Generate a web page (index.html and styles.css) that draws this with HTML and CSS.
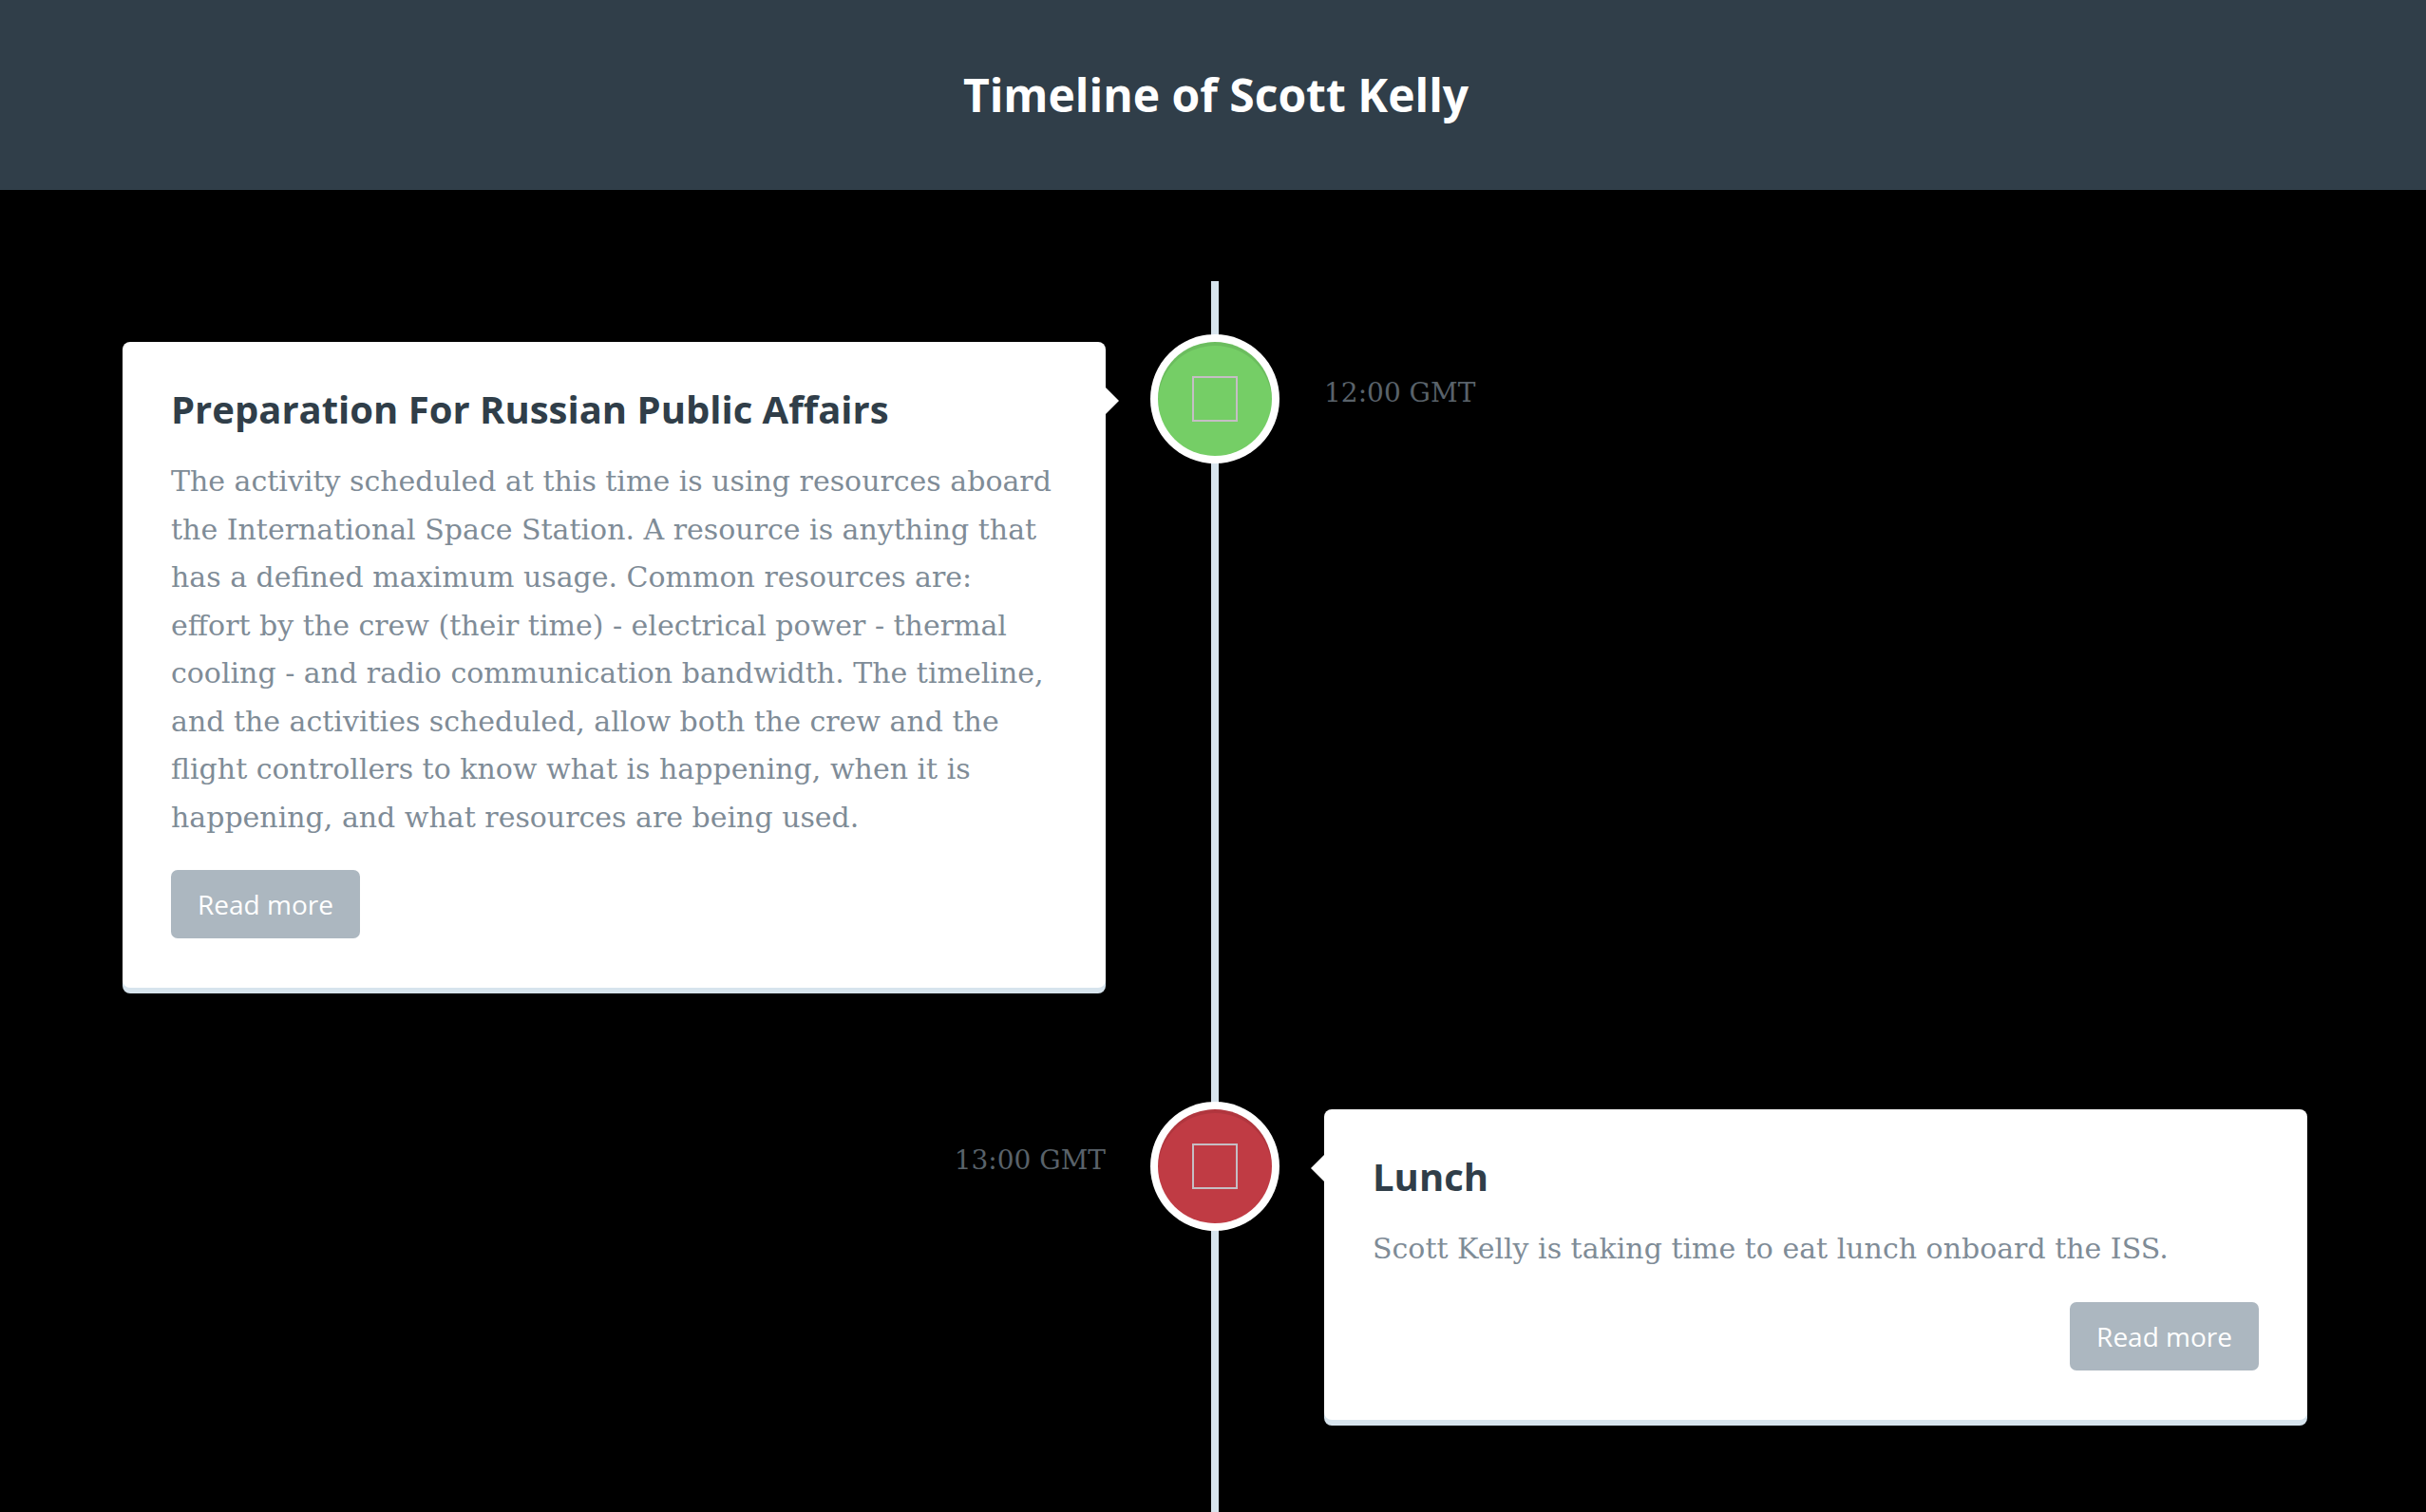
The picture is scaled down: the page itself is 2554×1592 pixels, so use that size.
FILE: index.html
```html
<!DOCTYPE html>
<html lang="en">
<head>
<meta charset="utf-8">
<title>Timeline of Scott Kelly</title>
<link rel="stylesheet" href="styles.css">
</head>
<body>
<header class="page-header">
  <h1>Timeline of Scott Kelly</h1>
</header>
<section class="timeline">
  <div class="tl-block">
    <div class="tl-card">
      <h2>Preparation For Russian Public Affairs</h2>
      <p>The activity scheduled at this time is using resources aboard the International Space Station. A resource is anything that has a defined maximum usage. Common resources are: effort by the crew (their time) - electrical power - thermal cooling - and radio communication bandwidth. The timeline, and the activities scheduled, allow both the crew and the flight controllers to know what is happening, when it is happening, and what resources are being used.</p>
      <a class="read-more" href="#">Read more</a>
    </div>
    <div class="tl-marker tl-green"><span class="tl-icon"></span></div>
    <span class="tl-date">12:00 GMT</span>
  </div>
  <div class="tl-block tl-even">
    <div class="tl-card">
      <h2>Lunch</h2>
      <p>Scott Kelly is taking time to eat lunch onboard the ISS.</p>
      <a class="read-more" href="#">Read more</a>
    </div>
    <div class="tl-marker tl-red"><span class="tl-icon"></span></div>
    <span class="tl-date">13:00 GMT</span>
  </div>
</section>
</body>
</html>
```

FILE: styles.css
```css
* { box-sizing: border-box; }
html, body { margin: 0; padding: 0; }
body {
  background: #000;
  font-family: "DejaVu Serif", serif;
  color: #7f8c97;
  line-height: 1;
}
.page-header {
  height: 200px;
  background: #303e49;
  display: flex;
  align-items: center;
  justify-content: center;
  padding-left: 6px;
}
.page-header h1 {
  margin: 0;
  font-family: "Open Sans", sans-serif;
  font-weight: 700;
  font-size: 48px;
  line-height: 200px;
  color: #fff;
}
.timeline {
  width: 2300px;
  margin: 96px 0 0 129px;
  padding: 64px 0 160px;
  background: linear-gradient(#d7e4ed, #d7e4ed) center top / 8px 100% no-repeat;
  display: flex;
  flex-direction: column;
  gap: 128px;
}
.tl-block {
  display: grid;
  grid-template-columns: 45% 10% 45%;
  align-items: start;
}
.tl-card {
  grid-row: 1;
  grid-column: 1;
  position: relative;
  background: #fff;
  border-radius: 8px;
  padding: 51px 51px 52px;
  box-shadow: 0 6px 0 #d7e4ed;
  display: flex;
  flex-direction: column;
  align-items: flex-start;
}
.tl-card::before {
  content: "";
  position: absolute;
  top: 48px;
  left: 100%;
  width: 0;
  height: 0;
  border: 14px solid transparent;
  border-left-color: #fff;
}
.tl-even .tl-card {
  grid-column: 3;
  align-items: stretch;
}
.tl-even .tl-card::before {
  left: auto;
  right: 100%;
  border-left-color: transparent;
  border-right-color: #fff;
}
.tl-card h2 {
  margin: 0;
  font-family: "Open Sans", sans-serif;
  font-weight: 700;
  font-size: 40px;
  line-height: 40px;
  color: #303e49;
}
.tl-card p {
  margin: 31px 0 30px;
  font-size: 30px;
  line-height: 50.5px;
}
.read-more {
  display: inline-block;
  padding: 22px 28px;
  font-family: "Open Sans", sans-serif;
  font-size: 28px;
  line-height: 28px;
  background: #acb7c0;
  color: #fff;
  border-radius: 7px;
  text-decoration: none;
}
.tl-even .read-more { align-self: flex-end; }
.tl-marker {
  grid-row: 1;
  grid-column: 2;
  justify-self: center;
  width: 120px;
  height: 120px;
  border-radius: 50%;
  box-shadow: 0 0 0 8px #fff, inset 0 4px 0 rgba(0, 0, 0, 0.08);
  display: flex;
  align-items: center;
  justify-content: center;
}
.tl-green { background: #75ce66; }
.tl-red { background: #c03b44; }
.tl-icon {
  width: 48px;
  height: 48px;
  border: 2px solid #c5bec4;
}
.tl-date {
  grid-row: 1;
  grid-column: 3;
  padding-top: 40px;
  font-size: 28px;
  color: #59626a;
}
.tl-even .tl-date {
  grid-column: 1;
  text-align: right;
}
```
